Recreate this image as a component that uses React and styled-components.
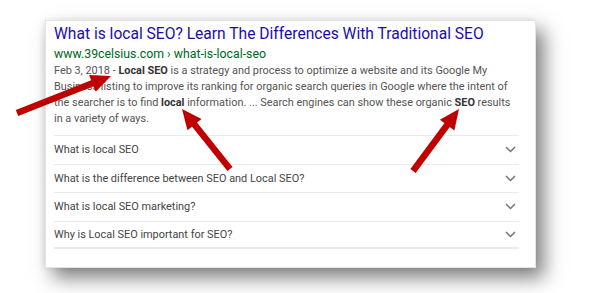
import React from 'react'
import styled, { createGlobalStyle } from 'styled-components'

const GlobalStyle = createGlobalStyle`
  html, body {
    margin: 0;
    padding: 0;
    background: #fff;
  }
  body {
    width: 590px;
    height: 293px;
    overflow: hidden;
    font-family: Roboto, "Liberation Sans", Arial, sans-serif;
  }
`

const Page = styled.div`
  position: relative;
  width: 590px;
  height: 293px;
  padding: 20px 0 0 45px;
  box-sizing: border-box;
`

const Card = styled.div`
  width: 491px;
  height: 248px;
  box-sizing: border-box;
  padding: 2px 16px 0 8px;
  background: #fff;
  border: 1px solid #e4e4e4;
  box-shadow: 8px 10px 18px rgba(0, 0, 0, 0.5), -2px 0 6px rgba(0, 0, 0, 0.08);
`

const Title = styled.a`
  display: block;
  font-size: 15.6px;
  line-height: 22px;
  color: #1a0dab;
  text-decoration: none;
  white-space: nowrap;
`

const Url = styled.div`
  font-size: 12.3px;
  line-height: 18px;
  color: #006621;
`

const Snippet = styled.p`
  margin: 0;
  font-size: 10.9px;
  line-height: 16px;
  color: #545454;
  white-space: nowrap;

  b {
    color: #333;
    font-weight: 700;
  }
`

const Faq = styled.ul`
  list-style: none;
  margin: 8px 0 0;
  padding: 0;
`

const Row = styled.li`
  display: flex;
  align-items: center;
  justify-content: space-between;
  height: 28.5px;
  box-sizing: border-box;
  border-top: 1px solid #ebebeb;
  border-bottom: ${p => (p.last ? '2px solid #ebebeb' : 'none')};
  font-size: 10.9px;
  color: #444;
  padding-right: 3px;
`

const Chevron = () => (
  <svg width="11" height="7" viewBox="0 0 11 7">
    <path d="M1 1 L5.5 5.5 L10 1" fill="none" stroke="#70757a" strokeWidth="1.5" />
  </svg>
)

const Arrows = styled.svg`
  position: absolute;
  left: 0;
  top: 0;
  pointer-events: none;
`

const Arrow = ({ x1, y1, x2, y2 }) => {
  const dx = x2 - x1
  const dy = y2 - y1
  const len = Math.hypot(dx, dy)
  const ux = dx / len
  const uy = dy / len
  const head = 20
  const half = 9
  const bx = x2 - ux * head
  const by = y2 - uy * head
  const px = -uy
  const py = ux
  return (
    <g fill="#c00000" stroke="#c00000">
      <line x1={x1} y1={y1} x2={bx + ux * 2} y2={by + uy * 2} strokeWidth="6.5" />
      <polygon
        stroke="none"
        points={`${x2},${y2} ${bx + px * half},${by + py * half} ${bx - px * half},${by - py * half}`}
      />
    </g>
  )
}

const questions = [
  'What is local SEO',
  'What is the difference between SEO and Local SEO?',
  'What is local SEO marketing?',
  'Why is Local SEO important for SEO?',
]

const App = () => (
  <Page>
    <GlobalStyle />
    <Card>
      <Title>What is local SEO? Learn The Differences With Traditional SEO</Title>
      <Url>www.39celsius.com › what-is-local-seo</Url>
      <Snippet>
        Feb 3, 2018 - <b>Local SEO</b> is a strategy and process to optimize a website and its Google My
        <br />
        Business listing to improve its ranking for organic search queries in Google where the intent of
        <br />
        the searcher is to find <b>local</b> information. ... Search engines can show these organic <b>SEO</b> results
        <br />
        in a variety of ways.
      </Snippet>
      <Faq>
        {questions.map((q, i) => (
          <Row key={q} last={i === questions.length - 1}>
            {q}
            <Chevron />
          </Row>
        ))}
      </Faq>
    </Card>
    <Arrows width="590" height="293">
      <Arrow x1={17} y1={113} x2={111} y2={76} />
      <Arrow x1={230} y1={169} x2={182} y2={109} />
      <Arrow x1={413} y1={171} x2={459} y2={109} />
    </Arrows>
  </Page>
)

export default App
